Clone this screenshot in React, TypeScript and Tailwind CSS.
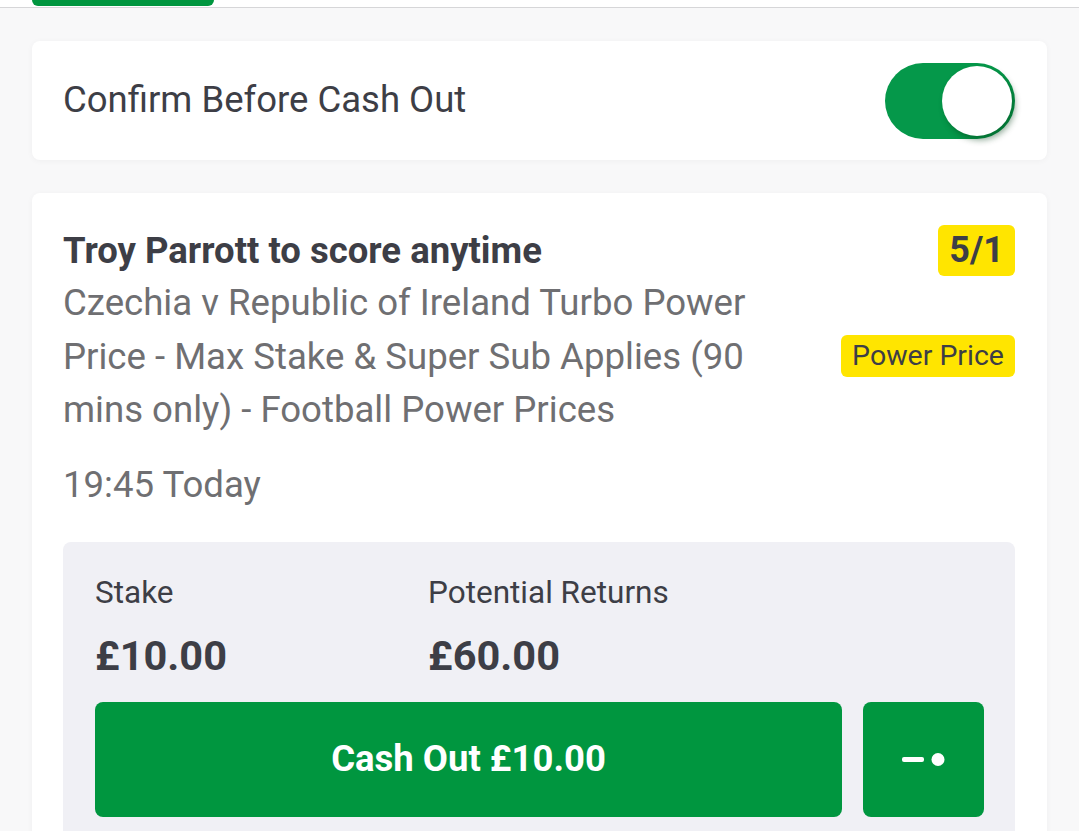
import { useState } from "react";

function Toggle({ on, onChange }: { on: boolean; onChange: () => void }) {
  return (
    <button
      type="button"
      onClick={onChange}
      className={`relative h-[76px] w-[130px] shrink-0 rounded-full ${on ? "bg-[#05984a]" : "bg-gray-300"}`}
    >
      <span
        className={`absolute top-[3px] h-[70px] w-[70px] rounded-full bg-white shadow-[3px_4px_6px_rgba(0,60,20,0.45)] ${on ? "left-[57px]" : "left-[3px]"}`}
      />
    </button>
  );
}

export default function App() {
  const [confirm, setConfirm] = useState(true);

  return (
    <div className="min-h-screen bg-[#f8f8f9] font-['Roboto',sans-serif] text-[#3d3e46]">
      {/* tab strip */}
      <div className="relative h-[8px] border-b border-[#d6d6d8] bg-white">
        <div className="absolute left-[32px] top-0 h-[6px] w-[182px] rounded-b-md bg-[#00963f]" />
      </div>

      <div className="flex flex-col gap-[33px] px-[32px] pt-[33px]">
        {/* confirm toggle */}
        <div className="flex h-[119px] items-center justify-between rounded-lg bg-white pl-[31px] pr-[32px] shadow-[0_1px_6px_rgba(0,0,0,0.04)]">
          <span className="text-[36.5px]">Confirm Before Cash Out</span>
          <Toggle on={confirm} onChange={() => setConfirm(!confirm)} />
        </div>

        {/* bet card */}
        <div className="rounded-lg bg-white pl-[31px] pr-[32px] pt-[32px] pb-[32px] shadow-[0_1px_6px_rgba(0,0,0,0.04)]">
          <div className="flex items-center justify-between">
            <h2 className="text-[36.5px] font-bold leading-[51px]">Troy Parrott to score anytime</h2>
            <span className="rounded-md bg-[#ffe500] px-[11px] text-[36px] font-bold leading-[51px]">5/1</span>
          </div>
          <div className="flex items-center justify-between gap-[50px]">
            <p className="flex-1 text-[36.6px] leading-[53.5px] text-[#6f6f72]">
              Czechia v Republic of Ireland Turbo Power Price - Max Stake &amp; Super Sub Applies (90
              mins only) - Football Power Prices
            </p>
            <span className="rounded-md bg-[#ffe500] px-[11px] text-[28.5px] leading-[42px]">Power Price</span>
          </div>
          <p className="mt-[21px] text-[36.6px] leading-[53px] text-[#6f6f72]">19:45 Today</p>

          <div className="mt-[31px] rounded-lg bg-[#f0f0f5] pl-[32px] pr-[31px] pt-[32px] pb-[32px]">
            <div className="flex">
              <div className="w-[333px]">
                <div className="text-[31.5px] leading-[38px]">Stake</div>
                <div className="mt-[20px] text-[41.5px] font-bold leading-[48px]">£10.00</div>
              </div>
              <div>
                <div className="text-[31.5px] leading-[38px]">Potential Returns</div>
                <div className="mt-[20px] text-[41.5px] font-bold leading-[48px]">£60.00</div>
              </div>
            </div>
            <div className="mt-[22px] flex gap-[21px]">
              <button className="h-[115px] flex-1 rounded-lg bg-[#00963f] text-[36.5px] font-bold text-white">
                Cash Out £10.00
              </button>
              <button className="flex h-[115px] w-[121px] items-center justify-center rounded-lg bg-[#00963f]">
                <svg width="44" height="14" viewBox="0 0 44 14">
                  <rect x="0" y="5" width="22" height="5" rx="2" fill="white" />
                  <circle cx="36" cy="7.5" r="6.5" fill="white" />
                </svg>
              </button>
            </div>
          </div>
        </div>
      </div>
    </div>
  );
}
